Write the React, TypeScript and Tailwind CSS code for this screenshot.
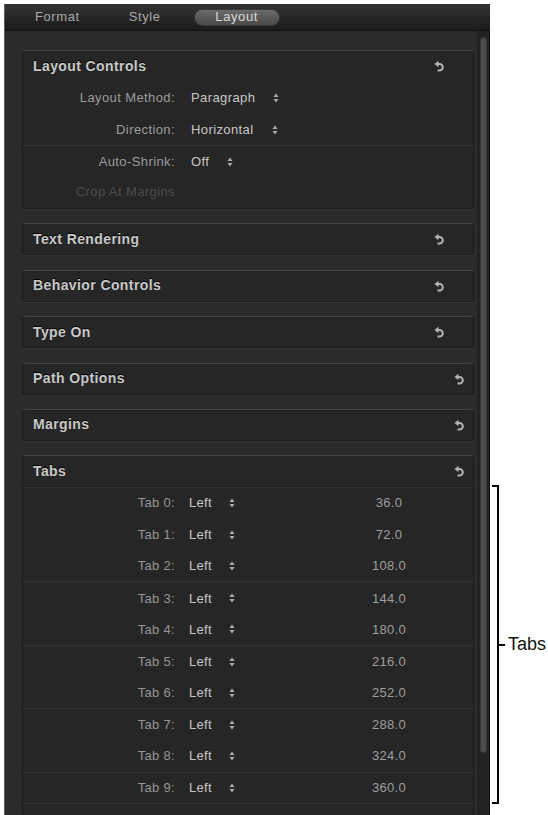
import React from "react";

const font = { fontFamily: '"Liberation Sans", Arial, sans-serif' };

function UndoIcon() {
  return (
    <svg width="10" height="12" viewBox="0 0 10 12" className="shrink-0">
      <polygon points="0.5,4 4.5,0.8 4.5,7.2" fill="#b4b4b4" />
      <path d="M4 4 H5.5 A3.3 3.3 0 0 1 5.5 10.6 H3.5" fill="none" stroke="#b4b4b4" strokeWidth="2" />
    </svg>
  );
}

function Stepper() {
  return (
    <svg width="6" height="10" viewBox="0 0 6 10" className="shrink-0">
      <polygon points="0.5,4 3,0.5 5.5,4" fill="#ababab" />
      <polygon points="0.5,6 3,9.5 5.5,6" fill="#ababab" />
    </svg>
  );
}

function Header({ title, far }: { title: string; far?: boolean }) {
  return (
    <div
      className={`flex items-center justify-between h-[30px] pl-[10px] ${far ? "pr-[9px]" : "pr-[29px]"}`}
    >
      <span className="text-[14px] font-bold tracking-[0.4px] text-[#c9c9c9] [text-shadow:0_-1px_0_#000]">
        {title}
      </span>
      <UndoIcon />
    </div>
  );
}

function Collapsed({ title, far }: { title: string; far?: boolean }) {
  return (
    <div className="rounded-[3px] bg-[#262626] border border-[#1b1b1b] border-t-[#434343] shadow-[0_1px_0_#353535]">
      <Header title={title} far={far} />
    </div>
  );
}

function ParamRow({
  label,
  value,
  h,
  line,
}: {
  label: string;
  value: string;
  h: string;
  line?: boolean;
}) {
  return (
    <div className={`flex items-center ${h} ${line ? "border-b border-[#333333]" : ""}`}>
      <span className="w-[152px] text-right text-[13px] tracking-[0.4px] text-[#9c9c9c]">{label}</span>
      <span className="ml-[16px] flex items-center gap-[18px] text-[13px] tracking-[0.4px] text-[#c6c6c6]">
        {value}
        <Stepper />
      </span>
    </div>
  );
}

const tabs = [
  ["Tab 0:", "36.0"],
  ["Tab 1:", "72.0"],
  ["Tab 2:", "108.0"],
  ["Tab 3:", "144.0"],
  ["Tab 4:", "180.0"],
  ["Tab 5:", "216.0"],
  ["Tab 6:", "252.0"],
  ["Tab 7:", "288.0"],
  ["Tab 8:", "324.0"],
  ["Tab 9:", "360.0"],
  ["", ""],
];

const lineAfter = [2, 4, 6, 8, 9];

export default function App() {
  return (
    <div className="w-[548px] h-[815px] bg-white overflow-hidden flex pt-[4px] pl-[4px]" style={font}>
      <div className="w-[486px] h-[811px] shrink-0 flex flex-col bg-[#2b2b2b] border-l border-[#5c5c5c] overflow-hidden">
        {/* tab bar */}
        <div className="h-[27px] shrink-0 flex items-center bg-gradient-to-b from-[#333333] to-[#1b1b1b] border-b border-[#111111] text-[13px] tracking-[0.6px]">
          <span className="ml-[30px] text-[#a9a9a9]">Format</span>
          <span className="ml-[49px] text-[#a9a9a9]">Style</span>
          <span className="ml-[33px] w-[86px] h-[17px] rounded-full flex items-center justify-center bg-gradient-to-b from-[#6a6a6a] to-[#4a4a4a] border border-[#3a3a3a] text-[#dadada]">
            Layout
          </span>
        </div>

        <div className="flex flex-1 min-h-0">
          {/* content */}
          <div className="flex-1 flex flex-col gap-[14.4px] pt-[19px] pl-[17px] pr-[3px]">
            <div className="rounded-[3px] bg-[#262626] border border-[#1b1b1b] border-t-[#434343] shadow-[0_1px_0_#353535]">
              <Header title="Layout Controls" />
              <ParamRow label="Layout Method:" value="Paragraph" h="h-[34px]" />
              <ParamRow label="Direction:" value="Horizontal" h="h-[31px]" line />
              <ParamRow label="Auto-Shrink:" value="Off" h="h-[32px]" />
              <div className="flex items-center h-[30px] pb-[2px]">
                <span className="w-[152px] text-right text-[13px] tracking-[0.4px] text-[#4c4c4c]">
                  Crop At Margins
                </span>
              </div>
            </div>

            <Collapsed title="Text Rendering" />
            <Collapsed title="Behavior Controls" />
            <Collapsed title="Type On" />
            <Collapsed title="Path Options" far />
            <Collapsed title="Margins" far />

            <div className="rounded-t-[3px] bg-[#262626] border border-[#1b1b1b] border-t-[#434343]">
              <div className="border-b border-[#1c1c1c] shadow-[0_1px_0_#343434]">
                <Header title="Tabs" far />
              </div>
              {tabs.map(([label, value], i) => (
                <div
                  key={i}
                  className={`flex items-center h-[31.7px] ${
                    lineAfter.includes(i) ? "border-b border-[#343434]" : ""
                  }`}
                >
                  <span className="w-[152px] text-right text-[13px] tracking-[0.3px] text-[#959595]">
                    {label}
                  </span>
                  <span className="ml-[14px] w-[60px] flex items-center gap-[17px] text-[13px] tracking-[0.3px] text-[#c6c6c6]">
                    Left
                    <Stepper />
                  </span>
                  <span className="ml-[100px] w-[80px] text-center text-[13px] tracking-[0.3px] text-[#9e9e9e]">
                    {value}
                  </span>
                </div>
              ))}
            </div>
          </div>

          {/* scrollbar */}
          <div className="w-[13px] shrink-0 bg-[#222222] border-r border-[#151515] flex justify-center pt-[6px]">
            <div className="w-[7px] h-[716px] rounded-full bg-[#4b4b4b] border border-[#3a3a3a]" />
          </div>
        </div>
      </div>

      {/* callout */}
      <div className="mt-[481px] ml-[2px] h-[319px] flex items-center shrink-0">
        <div className="w-[7px] h-full border-y-2 border-r-2 border-black" />
        <div className="w-[6px] h-[2px] bg-black" />
        <span className="ml-[3px] text-[18px] text-[#111111] whitespace-nowrap">Tabs</span>
      </div>
    </div>
  );
}
